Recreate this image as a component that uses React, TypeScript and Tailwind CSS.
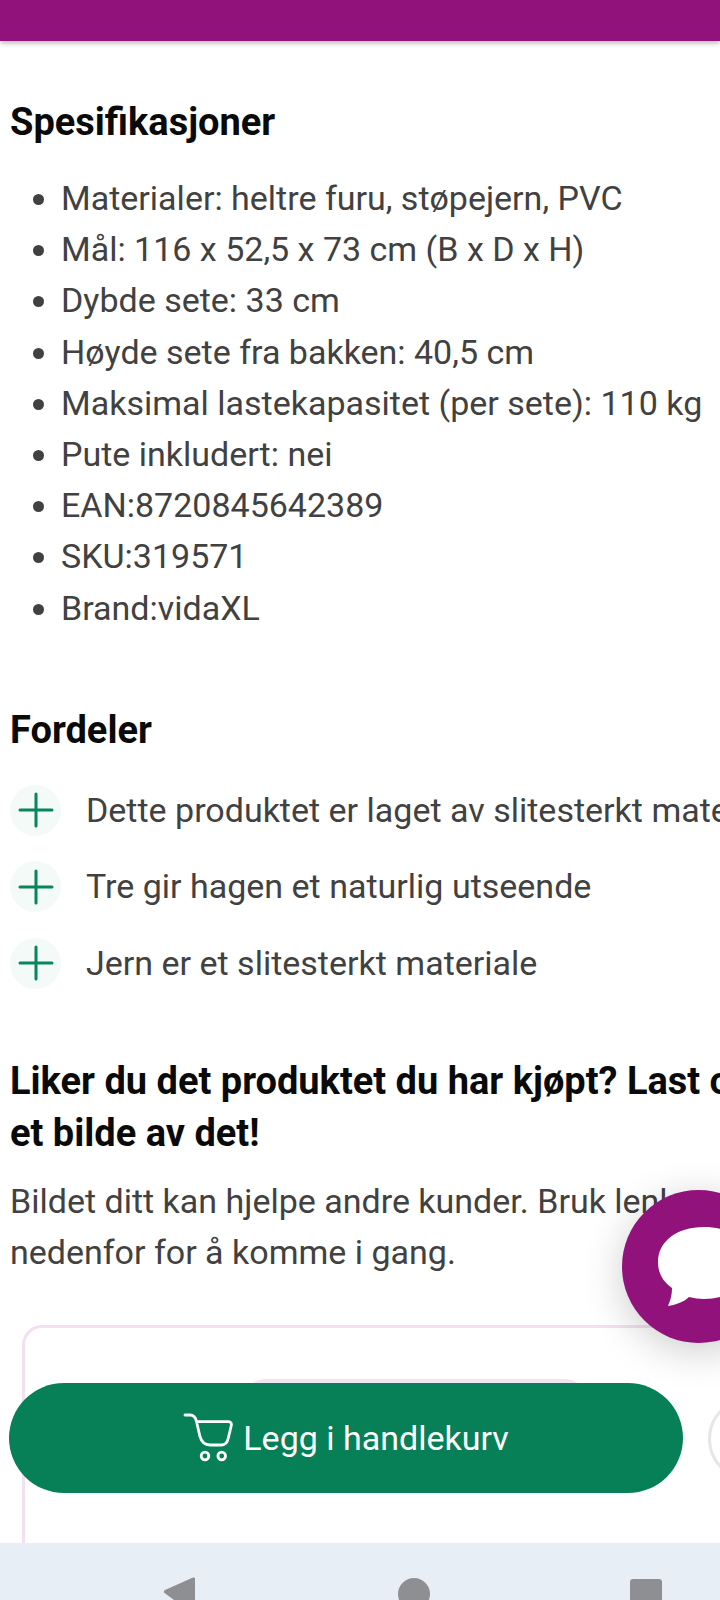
import React from "react";

const specs = [
  "Materialer: heltre furu, støpejern, PVC",
  "Mål: 116 x 52,5 x 73 cm (B x D x H)",
  "Dybde sete: 33 cm",
  "Høyde sete fra bakken: 40,5 cm",
  "Maksimal lastekapasitet (per sete): 110 kg",
  "Pute inkludert: nei",
  "EAN:8720845642389",
  "SKU:319571",
  "Brand:vidaXL",
];

const pros = [
  "Dette produktet er laget av slitesterkt materiale",
  "Tre gir hagen et naturlig utseende",
  "Jern er et slitesterkt materiale",
];

function Plus() {
  return (
    <span className="flex h-[51px] w-[51px] shrink-0 items-center justify-center rounded-full bg-[#f3faf7]">
      <svg width="36" height="36" viewBox="0 0 36 36" fill="none" stroke="#07855b" strokeWidth="3" strokeLinecap="round">
        <path d="M18 2v32M2 18h32" />
      </svg>
    </span>
  );
}

export default function App() {
  return (
    <div className="relative flex h-[1600px] w-[720px] flex-col overflow-hidden bg-white font-['Roboto',sans-serif]">
      <header className="h-[41px] shrink-0 bg-[#92127c] shadow-[0_2px_5px_rgba(0,0,0,0.3)]" />

      <main className="min-h-0 flex-1 overflow-hidden pl-[10px]">
        <h2 className="mt-[56px] text-[38px] leading-[50px] font-bold whitespace-nowrap text-[#0a0a0a]">Spesifikasjoner</h2>
        <ul className="mt-[26px] list-disc pl-[51px] text-[34px] leading-[51.2px] whitespace-nowrap text-[#414141] marker:text-[#414141]">
          {specs.map((s) => (
            <li key={s}>{s}</li>
          ))}
        </ul>

        <h2 className="mt-[71px] text-[38px] leading-[50px] font-bold whitespace-nowrap text-[#0a0a0a]">Fordeler</h2>
        <div className="mt-[30px] flex flex-col gap-[25.5px]">
          {pros.map((p) => (
            <div key={p} className="flex items-center gap-[25px] text-[34px] leading-[51px] whitespace-nowrap text-[#414141]">
              <Plus />
              <span>{p}</span>
            </div>
          ))}
        </div>

        <h2 className="mt-[66px] text-[38px] leading-[52px] font-bold whitespace-nowrap text-[#0a0a0a]">
          Liker du det produktet du har kjøpt? Last opp
          <br />
          et bilde av det!
        </h2>
        <p className="mt-[17px] text-[34px] leading-[51px] whitespace-nowrap text-[#414141]">
          Bildet ditt kan hjelpe andre kunder. Bruk lenken
          <br />
          nedenfor for å komme i gang.
        </p>

        <section className="mt-[47px] ml-[12px] h-[300px] w-[760px] rounded-t-[20px] border-[3px] border-[#f3e0f0] pt-[51px]">
          <div className="ml-[220px] h-[40px] w-[340px] rounded-t-[20px] bg-[#f3e4f0]" />
        </section>
      </main>

      <nav className="h-[57px] shrink-0 bg-[#e8eef6]">
        <svg className="absolute left-[163px] top-[1577px]" width="32" height="23" viewBox="0 0 32 23" fill="#8e8f92">
          <path d="M30 0.5 Q32.5 0 32.5 3 V23 H11 L1.5 16 Q0 14.5 2 13 Z" />
        </svg>
        <span className="absolute left-[398px] top-[1578px] h-[32px] w-[32px] rounded-full bg-[#8e8f92]" />
        <span className="absolute left-[630px] top-[1579px] h-[32px] w-[32px] rounded-[3px] bg-[#8e8f92]" />
      </nav>

      <button className="absolute left-[9px] top-[1383px] flex h-[110px] w-[674px] items-center justify-center gap-[10px] rounded-[55px] bg-[#078057] text-[34px] text-white">
        <svg width="50" height="50" viewBox="0 0 50 50" fill="none" stroke="#ffffff" strokeWidth="2.8" strokeLinecap="round" strokeLinejoin="round">
          <path d="M2 2h5c3 0 5.5 2 6.5 6.5L17 23.7C18.5 29 22 32 27 32h11.7c3.3 0 5.6-2 6.6-7l3-12.5c.4-2.2-.6-3.8-2.8-3.8H13.7" />
          <circle cx="22" cy="43" r="3.8" />
          <circle cx="38.7" cy="43" r="3.8" />
        </svg>
        <span>Legg i handlekurv</span>
      </button>

      <span className="absolute left-[708px] top-[1397px] h-[84px] w-[84px] rounded-full border-[3px] border-[#e6e6e6] bg-white" />

      <button className="absolute left-[622px] top-[1190px] flex h-[153px] w-[153px] rounded-full bg-[#92127c] shadow-[0_8px_40px_rgba(0,0,0,0.2)]">
        <svg className="absolute left-[32px] top-[34px]" width="100" height="86" viewBox="0 0 100 86" fill="#ffffff">
          <path d="M50 3C22 3 4 18 4 38c0 10 4 19 14 26 0 6-1 11-4 18 7-1 16-4 21-9 5 1 10 2 15 2 28 0 46-16 46-37S78 3 50 3Z" />
        </svg>
      </button>
    </div>
  );
}
